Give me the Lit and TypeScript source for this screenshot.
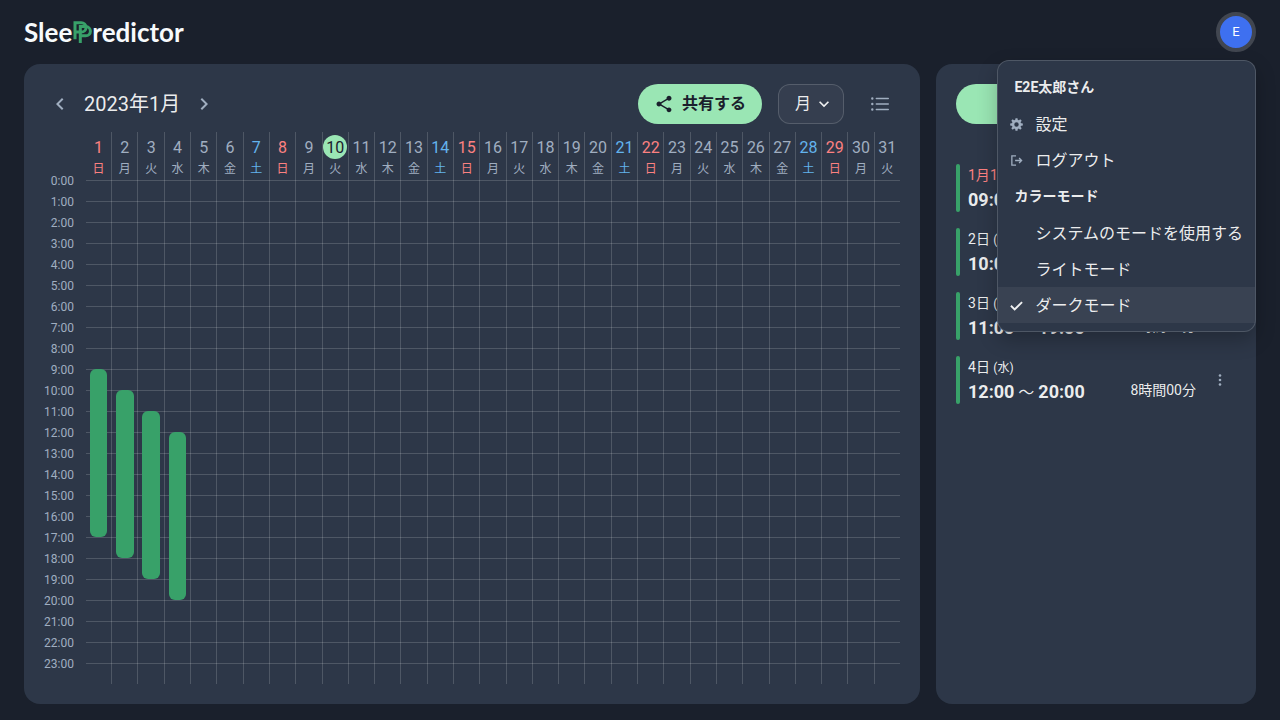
import { LitElement, html, css, svg } from "lit";
import { customElement, property } from "lit/decorators.js";
import { classMap } from "lit/directives/class-map.js";

const WEEKDAYS = ["日", "月", "火", "水", "木", "金", "土"];

interface Sleep {
  day: number;
  start: number;
  end: number;
}

const SLEEPS: Sleep[] = [
  { day: 1, start: 9, end: 17 },
  { day: 2, start: 10, end: 18 },
  { day: 3, start: 11, end: 19 },
  { day: 4, start: 12, end: 20 },
];

const TODAY = 10;

const clock = (hour: number) => `${String(hour).padStart(2, "0")}:00`;
const weekdayOf = (day: number) => (day - 1) % 7;

const reset = css`
  * {
    box-sizing: border-box;
  }
  button {
    margin: 0;
    padding: 0;
    border: 0;
    background: none;
    color: inherit;
    font: inherit;
    cursor: pointer;
  }
  svg {
    display: block;
    flex: none;
  }
`;

@customElement("sp-logo")
export class SpLogo extends LitElement {
  static styles = css`
    :host {
      display: block;
    }
    .logo {
      display: flex;
      align-items: center;
      font: 700 26px/32px Lato, sans-serif;
      color: #f7fafc;
      text-decoration: none;
    }
    .mark {
      display: block;
      width: 20px;
      height: 24px;
    }
  `;

  render() {
    return html`<a class="logo" href="#" aria-label="SleePredictor">
      <span>Slee</span>
      <svg class="mark" viewBox="0 0 20 24" fill="none" stroke="#38a169" stroke-width="3">
        <path d="M3 19.200V2.700h6.300a4.200 4.200 0 0 1 0 9.400H3" />
        <path d="M8.300 23V6.600h5.500a4.400 4.400 0 0 1 0 9.200H8.300" />
      </svg>
      <span>redictor</span>
    </a>`;
  }
}

@customElement("sp-calendar")
export class SpCalendar extends LitElement {
  @property({ attribute: false }) sleeps: Sleep[] = [];
  @property({ type: Number }) days = 31;

  static styles = [
    reset,
    css`
      :host {
        display: flex;
        flex-direction: column;
        gap: 8px;
        min-width: 0;
        padding: 20px;
        border-radius: 16px;
        background: #2d3748;
      }
      .toolbar {
        display: flex;
        align-items: center;
        gap: 16px;
      }
      .period {
        display: flex;
        align-items: center;
        gap: 8px;
        margin-right: auto;
      }
      .month {
        margin: 0;
        font-size: 20px;
        font-weight: 400;
        line-height: 32px;
      }
      .step {
        display: grid;
        place-items: center;
        width: 32px;
        height: 32px;
        color: #a0aec0;
      }
      .share {
        display: flex;
        align-items: center;
        gap: 8px;
        height: 40px;
        padding: 0 16px;
        border-radius: 20px;
        background: #9ae6b4;
        color: #1a202c;
        font-weight: 700;
      }
      .view {
        position: relative;
        display: flex;
        align-items: center;
      }
      .view select {
        appearance: none;
        height: 40px;
        width: 66px;
        margin: 0;
        padding: 0 16px;
        border: 1px solid rgba(255, 255, 255, 0.16);
        border-radius: 12px;
        background: rgba(255, 255, 255, 0.04);
        color: inherit;
        font: inherit;
      }
      .view svg {
        position: absolute;
        right: 10px;
        pointer-events: none;
      }
      .list {
        display: grid;
        place-items: center;
        width: 40px;
        height: 40px;
        color: #a0aec0;
      }
      .chart {
        flex: 1;
        display: grid;
        grid-template-columns: auto 1fr;
        grid-template-rows: 48px 1fr;
        column-gap: 12px;
        min-height: 0;
        color: #a0aec0;
      }
      .hours {
        grid-area: 2 / 1;
        display: grid;
        grid-template-rows: repeat(24, 1fr);
        font-size: 12px;
        line-height: 2px;
        text-align: right;
      }
      .rows {
        grid-area: 2 / 2;
        display: grid;
        grid-template-rows: repeat(24, 1fr);
      }
      .row {
        border-top: 1px solid rgba(255, 255, 255, 0.16);
      }
      .columns {
        grid-area: 1 / 2 / 3 / 3;
        display: grid;
        grid-auto-flow: column;
        grid-auto-columns: minmax(0, 1fr);
        margin-right: -1px;
      }
      .day {
        display: grid;
        grid-template-rows: 48px 1fr;
        border-right: 1px solid rgba(255, 255, 255, 0.16);
      }
      .day:last-child {
        border-right-color: transparent;
      }
      .head {
        display: flex;
        flex-direction: column;
        align-items: center;
        padding-top: 3px;
      }
      .number {
        width: 24px;
        height: 24px;
        border-radius: 50%;
        font-size: 16px;
        line-height: 26px;
        text-align: center;
      }
      .weekday {
        font-size: 12px;
        line-height: 20px;
      }
      .sunday {
        color: #fc8181;
      }
      .saturday {
        color: #63b3ed;
      }
      .today .number {
        background: #9ae6b4;
        color: #1a202c;
      }
      .track {
        position: relative;
      }
      .bar {
        position: absolute;
        left: 15%;
        width: 70%;
        border-radius: 6px;
        background: #38a169;
      }
    `,
  ];

  private renderDay(day: number) {
    const weekday = weekdayOf(day);
    const classes = {
      head: true,
      sunday: weekday === 0,
      saturday: weekday === 6,
      today: day === TODAY,
    };
    return html`<div class="day">
      <div class=${classMap(classes)}>
        <span class="number">${day}</span>
        <span class="weekday">${WEEKDAYS[weekday]}</span>
      </div>
      <div class="track">
        ${this.sleeps
          .filter((s) => s.day === day)
          .map(
            (s) => html`<div
              class="bar"
              style="top:${(s.start / 24) * 100}%;height:${((s.end - s.start) / 24) * 100}%"
            ></div>`,
          )}
      </div>
    </div>`;
  }

  render() {
    const hours = Array.from({ length: 24 }, (_, i) => i);
    const days = Array.from({ length: this.days }, (_, i) => i + 1);
    return html`
      <div class="toolbar">
        <div class="period">
          <button class="step" aria-label="前の月">
            <svg width="24" height="24" viewBox="0 0 24 24" fill="currentColor">
              <path d="M15.41 7.41 14 6l-6 6 6 6 1.410-1.410L10.830 12z" />
            </svg>
          </button>
          <h1 class="month">2023年1月</h1>
          <button class="step" aria-label="次の月">
            <svg width="24" height="24" viewBox="0 0 24 24" fill="currentColor">
              <path d="M10 6 8.590 7.410 13.170 12l-4.580 4.590L10 18l6-6z" />
            </svg>
          </button>
        </div>
        <button class="share">
          <svg width="20" height="20" viewBox="0 0 24 24" fill="currentColor">
            <path
              d="M18 16.080c-.76 0-1.440.3-1.960.77L8.910 12.700c.05-.23.09-.46.09-.7s-.04-.47-.09-.7l7.050-4.110c.54.5 1.250.81 2.040.81 1.660 0 3-1.340 3-3s-1.340-3-3-3-3 1.340-3 3c0 .24.04.47.09.7L8.040 9.810C7.500 9.310 6.790 9 6 9c-1.660 0-3 1.340-3 3s1.340 3 3 3c.79 0 1.500-.31 2.040-.81l7.120 4.160c-.05.21-.08.43-.08.65 0 1.610 1.310 2.920 2.920 2.920s2.920-1.310 2.920-2.920-1.310-2.920-2.920-2.920z"
            />
          </svg>
          <span>共有する</span>
        </button>
        <div class="view">
          <select aria-label="表示期間">
            <option>月</option>
            <option>週</option>
          </select>
          <svg width="20" height="20" viewBox="0 0 24 24" fill="currentColor">
            <path d="M16.590 8.590 12 13.170 7.410 8.590 6 10l6 6 6-6z" />
          </svg>
        </div>
        <button class="list" aria-label="一覧">
          <svg width="24" height="24" viewBox="0 0 24 24" fill="none" stroke="currentColor" stroke-width="1.400" stroke-linecap="round">
            <path d="M8.300 6.500h12M8.300 12h12M8.300 17.500h12" />
            <path d="M4.300 6.500h.01M4.300 12h.01M4.300 17.500h.01" stroke-width="2.400" />
          </svg>
        </button>
      </div>
      <div class="chart">
        <div class="hours">${hours.map((h) => html`<span>${h}:00</span>`)}</div>
        <div class="rows">${hours.map(() => html`<div class="row"></div>`)}</div>
        <div class="columns">${days.map((d) => this.renderDay(d))}</div>
      </div>
    `;
  }
}

@customElement("sp-records")
export class SpRecords extends LitElement {
  @property({ attribute: false }) sleeps: Sleep[] = [];

  static styles = [
    reset,
    css`
      :host {
        display: flex;
        flex-direction: column;
        gap: 40px;
        padding: 20px;
        border-radius: 16px;
        background: #2d3748;
      }
      .add {
        height: 40px;
        border-radius: 20px;
        background: #9ae6b4;
        color: #1a202c;
        font-weight: 700;
      }
      .records {
        display: flex;
        flex-direction: column;
        gap: 16px;
        margin: 0;
        padding: 0;
        list-style: none;
      }
      .record {
        display: flex;
        align-items: center;
        gap: 8px;
        height: 48px;
      }
      .stripe {
        align-self: stretch;
        width: 4px;
        border-radius: 2px;
        background: #38a169;
      }
      .body {
        flex: 1;
        align-self: flex-start;
      }
      .date {
        font-size: 14px;
        line-height: 23px;
      }
      .date small {
        font-size: 12px;
      }
      .sunday {
        color: #fc8181;
      }
      .line {
        display: flex;
        align-items: flex-start;
        justify-content: space-between;
        line-height: 23px;
      }
      .range {
        font-size: 18px;
      }
      .range b {
        font-weight: 700;
      }
      .wave {
        font-size: 16px;
      }
      .total {
        font-size: 14px;
        line-height: 21px;
      }
      .more {
        display: grid;
        place-items: center;
        width: 32px;
        height: 32px;
        color: #a0aec0;
      }
    `,
  ];

  render() {
    return html`
      <button class="add">記録する</button>
      <ul class="records">
        ${this.sleeps.map(
          (s, i) => html`<li class="record">
            <span class="stripe"></span>
            <div class="body">
              <div class=${classMap({ date: true, sunday: weekdayOf(s.day) === 0 })}>
                ${i === 0 ? "1月" : ""}${s.day}日 <small>(${WEEKDAYS[weekdayOf(s.day)]})</small>
              </div>
              <div class="line">
                <span class="range"><b>${clock(s.start)}</b><span class="wave"> 〜 </span><b>${clock(s.end)}</b></span>
                <span class="total">${s.end - s.start}時間00分</span>
              </div>
            </div>
            <button class="more" aria-label="メニュー">
              <svg width="16" height="16" viewBox="0 0 16 16" fill="currentColor">
                <circle cx="8" cy="3.500" r="1.300" />
                <circle cx="8" cy="8" r="1.300" />
                <circle cx="8" cy="12.500" r="1.300" />
              </svg>
            </button>
          </li>`,
        )}
      </ul>
    `;
  }
}

const gearTeeth = [0, 45, 90, 135, 180, 225, 270, 315];

const ICONS = {
  gear: svg`<g fill="currentColor">
      ${gearTeeth.map((a) => svg`<path transform="rotate(${a} 7 7)" d="M5.500 3 5.900.2h2.200L8.500 3z" />`)}
    </g>
    <circle cx="7" cy="7" r="3.700" fill="none" stroke="currentColor" stroke-width="2.600" />`,
  logout: svg`<path d="M6.500 2H2v10h4.500M5.500 7h7M9.800 4.300 12.500 7 9.800 9.700" fill="none" stroke="currentColor" stroke-width="1.400" />`,
  check: svg`<path d="M1 7.300 5 11.300l8-8" fill="none" stroke="currentColor" stroke-width="2" />`,
};

@customElement("sp-user-menu")
export class SpUserMenu extends LitElement {
  static styles = [
    reset,
    css`
      :host {
        display: block;
        position: relative;
      }
      .avatar {
        display: grid;
        place-items: center;
        width: 40px;
        height: 40px;
        border: 4px solid #414650;
        border-radius: 50%;
        background: #3e70f0;
        color: #fff;
        font-size: 13px;
      }
      .menu {
        position: absolute;
        z-index: 1;
        top: 48px;
        right: 0;
        display: flex;
        flex-direction: column;
        padding: 8px 0;
        border: 1px solid rgba(255, 255, 255, 0.16);
        border-radius: 12px;
        background: #2d3748;
        box-shadow: 0 8px 20px rgba(0, 0, 0, 0.24);
        white-space: nowrap;
      }
      .title {
        margin: 0;
        padding: 8px 16px;
        font-size: 14px;
        font-weight: 700;
        line-height: 21px;
      }
      .item {
        display: flex;
        align-items: center;
        gap: 12px;
        width: 100%;
        height: 36px;
        padding: 0 12px;
        text-align: left;
      }
      .label {
        padding-top: 2px;
      }
      .selected {
        background: rgba(255, 255, 255, 0.06);
      }
      .icon {
        width: 13px;
        height: 13px;
        color: #a0aec0;
      }
      .selected .icon {
        color: inherit;
      }
    `,
  ];

  private item(label: string, icon?: keyof typeof ICONS, selected = false) {
    return html`<button class=${classMap({ item: true, selected })} role="menuitem">
      <svg class="icon" viewBox="0 0 14 14">${icon ? ICONS[icon] : ""}</svg>
      <span class="label">${label}</span>
    </button>`;
  }

  render() {
    return html`
      <button class="avatar" aria-label="ユーザーメニュー" aria-expanded="true">E</button>
      <div class="menu" role="menu">
        <p class="title">E2E太郎さん</p>
        ${this.item("設定", "gear")} ${this.item("ログアウト", "logout")}
        <p class="title">カラーモード</p>
        ${this.item("システムのモードを使用する")} ${this.item("ライトモード")}
        ${this.item("ダークモード", "check", true)}
      </div>
    `;
  }
}

@customElement("app-root")
export class AppRoot extends LitElement {
  static styles = css`
    :host {
      box-sizing: border-box;
      display: flex;
      flex-direction: column;
      min-height: 100vh;
      padding: 0 24px 16px;
      background: #1a202c;
      color: rgba(255, 255, 255, 0.92);
      font: 400 16px/24px Roboto, "Noto Sans CJK JP", sans-serif;
    }
    .header {
      display: flex;
      align-items: center;
      justify-content: space-between;
      height: 64px;
    }
    .main {
      flex: 1;
      display: grid;
      grid-template-columns: minmax(0, 1fr) 320px;
      gap: 16px;
    }
  `;

  render() {
    return html`
      <header class="header">
        <sp-logo></sp-logo>
        <sp-user-menu></sp-user-menu>
      </header>
      <main class="main">
        <sp-calendar .sleeps=${SLEEPS}></sp-calendar>
        <sp-records .sleeps=${SLEEPS}></sp-records>
      </main>
    `;
  }
}
